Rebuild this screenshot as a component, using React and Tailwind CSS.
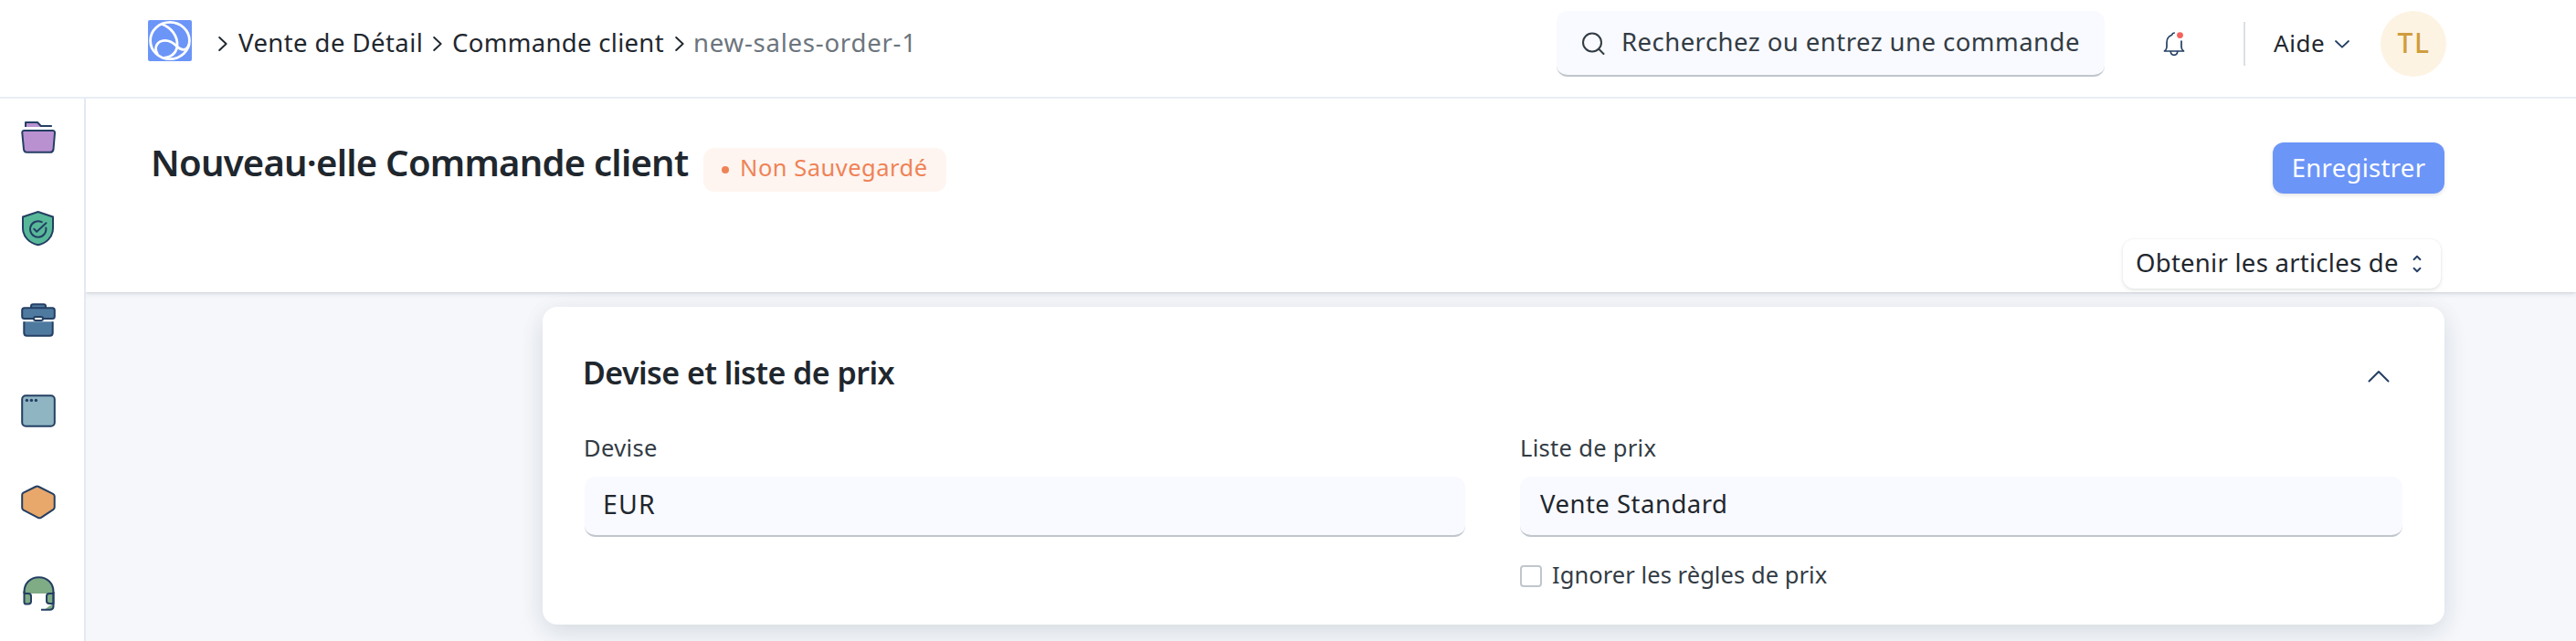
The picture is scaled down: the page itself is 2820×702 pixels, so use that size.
const NAVY = "#243f63";

function Logo() {
  return (
    <svg className="h-[45px] w-12 rounded-xs" viewBox="0 0 48 45" fill="none" stroke="#fff" strokeWidth="2.8">
      <rect width="48" height="45" fill="#6c95f8" stroke="none" />
      <ellipse cx="24" cy="22.5" rx="21.4" ry="20.1" />
      <path d="M15.5 4.5C25 8 32.5 17 32 27.5C31.6 34 28 40 17.5 41.5" />
      <path d="M10.5 37.5C6 30 10 22.5 18.5 22.3C29.5 22 31.5 32.2 38.5 32.4C42.5 32.5 44 29.500 45 26.500" />
    </svg>
  );
}

function Crumb() {
  return (
    <svg className="h-4 w-[10px] shrink-0" viewBox="0 0 10 16" fill="none" stroke="#1f272e" strokeWidth="1.9" strokeLinecap="round" strokeLinejoin="round">
      <path d="M1.200 1L8.600 8L1.200 15" />
    </svg>
  );
}

function SideIcon({ children }) {
  return (
    <svg className="h-10 w-10" viewBox="0 0 40 40" fill="none" stroke={NAVY} strokeWidth="2" strokeLinejoin="round">
      {children}
    </svg>
  );
}

function Sidebar() {
  return (
    <aside className="flex w-[94px] shrink-0 flex-col gap-[60px] border-r-2 border-[#e4e8f1] bg-white pt-[22px] pl-[22px]">
      <SideIcon>
        <path d="M6 9V4H19L22.800 8H34.800V9Z" fill="#b991d1" stroke="none" />
        <path d="M6 9V4H19L22.800 8H34.800" />
        <path d="M4.500 13H35.500Q38.200 13 38 15.500L36.500 33.500Q36 36.800 33 36.800H7.500Q4.300 36.800 4 33.500L2.300 15.500Q2.200 13 4.500 13Z" fill="#b991d1" />
      </SideIcon>
      <SideIcon>
        <path d="M19.700 2L36 7.500V19.500C36 30 28.500 36.500 19.700 38.300C11 36.500 3 30 3 19.500V7.500Z" fill="#57b899" />
        <path d="M23.700 13.200A8.700 8.700 0 1 0 28.300 19.500" strokeLinecap="round" />
        <path d="M15.300 20.800L18.200 23.700L28.500 14.200" strokeLinecap="round" />
      </SideIcon>
      <SideIcon>
        <path d="M12 7V5.500Q12 3.200 14.300 3.200H25.700Q28 3.200 28 5.500V7" fill="#4f7a9f" />
        <rect x="2.200" y="7.300" width="35.600" height="11.800" rx="2.500" fill="#4f7a9f" />
        <path d="M4.300 22.300V34.500Q4.300 37.700 7.500 37.700H32.500Q35.700 37.700 35.700 34.500V22.300" fill="#4f7a9f" />
        <rect x="15" y="17" width="10" height="4" rx="2" fill="#fff" />
      </SideIcon>
      <SideIcon>
        <rect x="2.200" y="3.200" width="35.600" height="33.600" rx="4" fill="#8fb5c3" />
        <g fill={NAVY} stroke="none">
          <circle cx="7.400" cy="8.400" r="1.700" />
          <circle cx="12.400" cy="8.400" r="1.700" />
          <circle cx="17.400" cy="8.400" r="1.700" />
        </g>
      </SideIcon>
      <SideIcon>
        <path d="M17 3Q18.700 2.200 20.300 3L36 10.800Q37.700 11.700 37.700 13.300V25.500Q37.700 27.200 36.200 28.100L23 36.800Q21.300 37.800 19.500 36.800L3.700 28.600Q2.200 27.700 2.200 26V12Q2.200 10.500 3.600 9.700Z" fill="#e8a76b" />
      </SideIcon>
      <SideIcon>
        <path d="M4.500 20V18.500C4.500 9 11 2.200 20.500 2.200C30 2.200 36.500 9 36.500 18.500V20" fill="#7fab85" />
        <path d="M36 31Q32 33.500 27 37.500L33 38Q37 37 36.500 31Z" fill="#7fab85" stroke="none" />
        <path d="M4.500 18V29.500Q4.500 31.600 6.800 31.600H9Q12 31.600 12 28.600V23Q12 20 9 20H4.500Z" fill="#7fab85" />
        <path d="M36.500 20H32Q29 20 29 23V28Q29 31 32 31H36.500Z" fill="#7fab85" />
        <path d="M36.500 18V34Q36.500 37.700 32.500 37.700H23" />
      </SideIcon>
    </aside>
  );
}

function Header() {
  return (
    <header className="flex h-[108px] items-start border-b-2 border-[#e9eef5] bg-white pl-[162px] text-[27.5px] leading-10 whitespace-nowrap text-[#1f272e]">
      <nav className="flex w-[1542px] shrink-0 items-start">
        <div className="mt-[22px] mr-[29px]">
          <Logo />
        </div>
        <div className="flex h-24 w-full items-center">
          <Crumb />
          <a className="ml-3 w-[213px] pb-[3px] tracking-[0.43px]">Vente de Détail</a>
          <Crumb />
          <a className="ml-[11px] w-[244px] pb-[3px] tracking-[0.31px]">Commande client</a>
          <Crumb />
          <span className="ml-[10px] pb-[3px] tracking-[0.78px] text-[#6c757d]">new-sales-order-1</span>
        </div>
      </nav>

      <div className="mt-3 flex h-[72px] w-[600px] shrink-0 items-center rounded-xl border-b-2 border-[#c0c6cc] bg-[#f9faff] pl-7 text-[#333c44]">
        <svg className="mr-[18px] h-[25px] w-[25px]" viewBox="0 0 25 25" fill="none" stroke="#333c44" strokeWidth="2" strokeLinecap="round">
          <circle cx="11" cy="11.500" r="10" />
          <path d="M18.300 18.800L23.500 24" />
        </svg>
        <span className="pb-[2px] tracking-[0.46px]">Recherchez ou entrez une commande</span>
      </div>

      <svg className="mt-[34px] ml-[64px] h-7 w-6 shrink-0" viewBox="0 0 24 28" fill="none" stroke={NAVY} strokeWidth="1.700" strokeLinecap="round" strokeLinejoin="round">
        <path d="M12.200 2C10.500 2 10 2.800 9.600 4.200C6 5.500 4 8.500 4 12.500V17.500C4 19.500 3 20.800 1.500 22H22.500C21 20.800 20 19.500 20 17.500V11" />
        <path d="M8.200 22.500C8.500 25 10 26.300 12 26.300C14 26.300 15.500 25 15.800 22.500" />
        <circle cx="18.500" cy="4.600" r="3.400" fill="#f5635e" stroke="none" />
      </svg>

      <div className="mt-6 ml-16 h-12 w-[2px] bg-[#dcdfe4]" />
      <div className="mt-[27px] ml-[31px] flex items-center">
        <span className="w-[67px] text-[26px] tracking-[0.56px]">Aide</span>
        <svg className="mt-[3px] h-[9px] w-4" viewBox="0 0 16 9" fill="none" stroke={NAVY} strokeWidth="1.800" strokeLinecap="round" strokeLinejoin="round">
          <path d="M1 1L8 7.700L15 1" />
        </svg>
      </div>
      <div className="mt-3 ml-[34px] flex h-[72px] w-[72px] items-center justify-center rounded-full bg-[#fdf3e3] pb-[2px] text-[30px] tracking-[1.5px] text-[#cf9d3e]">
        <span className="pl-[1px] font-medium">TL</span>
      </div>
    </header>
  );
}

function PageHead() {
  return (
    <section className="relative z-10 h-[212px] bg-white pr-[144px] pl-[71px] whitespace-nowrap text-[#1f272e] shadow-[0_1px_2px_rgba(25,39,52,0.10),0_2px_6px_rgba(25,39,52,0.10)]">
      <div className="flex items-start justify-between pt-12">
        <div className="flex items-start">
          <h1 className="mt-[-8px] w-[605px] text-[40px] leading-[60px] font-semibold tracking-[-0.76px]">Nouveau·elle Commande client</h1>
          <div className="mt-[6px] flex h-12 w-[266px] items-center rounded-xl bg-[#fef5f1] pl-5 text-[#ef8356]">
            <span className="mr-[12px] h-2 w-2 rounded-full bg-[#ef8356]" />
            <span className="pb-[6px] text-[25.5px] leading-9 tracking-[0.5px]">Non Sauvegardé</span>
          </div>
        </div>
        <button className="flex h-14 w-[188px] items-center justify-center rounded-xl bg-[#6c95f8] text-[27.5px] tracking-[0.3px] text-white shadow-[0_2px_4px_rgba(25,39,52,0.12)]">
          Enregistrer
        </button>
      </div>
      <div className="mt-[50px] mr-1 flex justify-end">
        <button className="flex h-[54px] w-[348px] items-center rounded-xl bg-white pl-[14px] text-[27.5px] tracking-[0.26px] shadow-[0_0_3px_rgba(25,39,52,0.07),0_2px_4px_rgba(25,39,52,0.10)]">
          <span className="w-[303px] pb-[2px] text-left">Obtenir les articles de</span>
          <svg className="h-5 w-[10px]" viewBox="0 0 10 20" fill="none" stroke={NAVY} strokeWidth="1.900" strokeLinecap="round" strokeLinejoin="round">
            <path d="M1.500 5.200L5 1.800L8.500 5.200M1.500 14.800L5 18.200L8.500 14.800" />
          </svg>
        </button>
      </div>
    </section>
  );
}

function Field({ label, value, labelClass, valueClass }) {
  return (
    <div>
      <label className={"block text-[25.5px] leading-9 text-[#333c44] " + labelClass}>{label}</label>
      <div className={"mt-[14px] flex h-[66px] items-center rounded-xl border-b-2 border-[#c0c6cc] bg-[#f9faff] pb-[4px] text-[#1f272e] " + valueClass}>{value}</div>
    </div>
  );
}

function Card() {
  return (
    <section className="mt-4 ml-[500px] h-[348px] w-[2082px] rounded-2xl bg-white pt-12 pr-[46px] pl-[46px] shadow-[0_4px_28px_rgba(25,39,52,0.05),0_10px_28px_rgba(25,39,52,0.09)]">
      <div className="flex h-12 items-center justify-between">
        <h2 className="-ml-[2px] text-[34px] leading-[48px] font-semibold tracking-[-0.55px] text-[#1f272e]">Devise et liste de prix</h2>
        <svg className="mt-[7px] mr-[14px] h-[14px] w-6" viewBox="0 0 24 14" fill="none" stroke={NAVY} strokeWidth="2" strokeLinecap="round" strokeLinejoin="round">
          <path d="M1.500 12.500L12 2L22.500 12.500" />
        </svg>
      </div>
      <div className="mt-10 flex gap-[60px]">
        <div className="w-[964px]">
          <Field label="Devise" value="EUR" labelClass="-ml-px tracking-[0.35px]" valueClass="pl-5 text-[28.5px] tracking-[1.2px]" />
        </div>
        <div className="w-[966px]">
          <Field label="Liste de prix" value="Vente Standard" labelClass="tracking-[0.3px]" valueClass="pl-[22px] text-[27.5px] tracking-[0.49px]" />
          <div className="mt-[22px] flex items-center">
            <span className="mt-[4px] h-6 w-6 rounded-[4px] border-2 border-[#c0c6cc] bg-white" />
            <span className="ml-[11px] pt-px text-[25.5px] leading-9 tracking-[0.06px] text-[#333c44]">Ignorer les règles de prix</span>
          </div>
        </div>
      </div>
    </section>
  );
}

export default function App() {
  return (
    <div className="flex h-[702px] w-[2820px] flex-col overflow-hidden bg-[#f5f7fb] font-['Noto_Sans',sans-serif]">
      <Header />
      <div className="flex min-h-0 flex-1">
        <Sidebar />
        <main className="flex-1 overflow-hidden">
          <PageHead />
          <Card />
        </main>
      </div>
    </div>
  );
}
